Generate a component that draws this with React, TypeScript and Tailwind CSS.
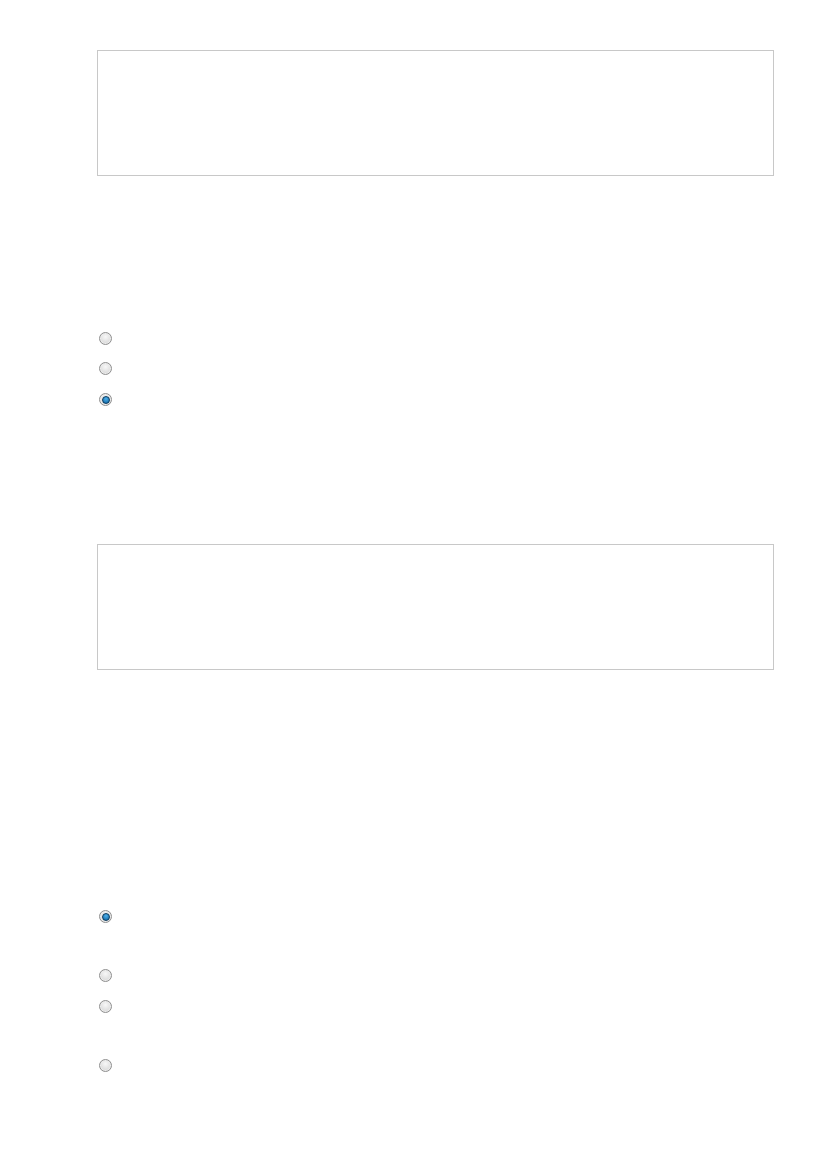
function Radio({ checked }: { checked?: boolean }) {
  return (
    <span className="flex h-[13px] w-[13px] items-center justify-center rounded-full border border-[#8f8f8f] bg-[radial-gradient(circle_at_50%_35%,#f8f8f8,#cfcfcf)] shadow-[inset_0_0_0_1px_#ececec]">
      {checked && (
        <span className="h-[8px] w-[8px] rounded-full border border-[#0b3a5e] bg-[radial-gradient(circle_at_50%_30%,#4fb0ea,#0a62a0)]" />
      )}
    </span>
  );
}

function Box() {
  return <div className="h-[126px] w-[677px] border border-[#c8c8c8] bg-white" />;
}

export default function App() {
  return (
    <div className="min-h-[1169px] w-[827px] bg-white pl-[97px] pt-[50px] font-['Liberation_Sans',sans-serif]">
      <Box />
      <div className="mt-[156px] flex flex-col">
        <div className="flex h-[30px] items-start pl-[2px]">
          <Radio />
        </div>
        <div className="flex h-[31px] items-start pl-[2px]">
          <Radio />
        </div>
        <div className="flex h-[30px] items-start pl-[2px]">
          <Radio checked />
        </div>
      </div>
      <div className="mt-[121px]">
        <Box />
      </div>
      <div className="mt-[240px] flex flex-col">
        <div className="flex h-[59px] items-start pl-[2px]">
          <Radio checked />
        </div>
        <div className="flex h-[31px] items-start pl-[2px]">
          <Radio />
        </div>
        <div className="flex h-[59px] items-start pl-[2px]">
          <Radio />
        </div>
        <div className="flex h-[30px] items-start pl-[2px]">
          <Radio />
        </div>
      </div>
    </div>
  );
}
